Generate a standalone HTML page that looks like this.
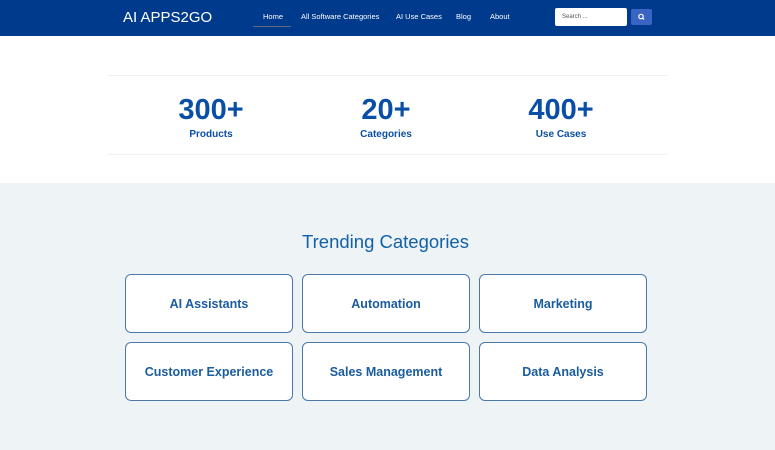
<!DOCTYPE html>
<html><head><style>
*{margin:0;padding:0;box-sizing:border-box}
body{width:775px;height:450px;overflow:hidden;font-family:"Liberation Sans",sans-serif;background:#fff}
.nav{height:36px;background:#003a8c;position:relative;color:#fff}
.logo{position:absolute;left:123px;top:9px;font-size:15px;letter-spacing:0}
.nav a{position:absolute;top:12px;font-size:7.5px;color:#fff}
.ul{position:absolute;left:253px;top:26px;width:38px;height:1px;background:#5a6a7a}
.search{position:absolute;left:555px;top:8px;width:72px;height:18px;background:#fff;border-radius:2px;color:#555;font-size:6px;padding:6px 0 0 7px}
.btn{position:absolute;left:631px;top:9px;width:21px;height:16px;background:#3a64c4;border-radius:2px}
.stats{position:relative;height:147px}
.line{position:absolute;left:107px;width:560px;height:1px;background:#eef0f2}
.stat{position:absolute;width:120px;text-align:center;color:#0a4fa6;font-weight:bold}
.stat b{display:block;font-size:29px;line-height:32px}
.stat span{font-size:10px;display:block;margin-top:3px}
.gray{background:#eef3f6;height:267px;position:relative}
h2{position:absolute;top:48px;width:100%;text-align:center;color:#1260a8;font-weight:normal;font-size:18.5px;left:-2px}
.card{position:absolute;width:168px;height:59px;border:1px solid #4a78a8;border-radius:6px;background:#fff;color:#1a5c9e;font-size:12.5px;font-weight:bold;display:flex;align-items:center;justify-content:center}
</style></head><body>
<div class="nav">
<div class="logo">AI APPS2GO</div>
<a style="left:263px">Home</a><div class="ul"></div>
<a style="left:301px">All Software Categories</a>
<a style="left:396px">AI Use Cases</a>
<a style="left:456px">Blog</a>
<a style="left:490px">About</a>
<div class="search">Search ...</div>
<div class="btn"><svg width="21" height="16"><circle cx="10" cy="7.5" r="2.2" stroke="#fff" stroke-width="1.2" fill="none"/><line x1="11.6" y1="9.1" x2="13" y2="10.5" stroke="#fff" stroke-width="1.3"/></svg></div>
</div>
<div class="stats">
<div class="line" style="top:39px"></div>
<div class="line" style="top:118px"></div>
<div class="stat" style="left:151px;top:58px"><b>300+</b><span>Products</span></div>
<div class="stat" style="left:326px;top:58px"><b>20+</b><span>Categories</span></div>
<div class="stat" style="left:501px;top:58px"><b>400+</b><span>Use Cases</span></div>
</div>
<div class="gray">
<h2>Trending Categories</h2>
<div class="card" style="left:125px;top:91px">AI Assistants</div>
<div class="card" style="left:302px;top:91px">Automation</div>
<div class="card" style="left:479px;top:91px">Marketing</div>
<div class="card" style="left:125px;top:159px">Customer Experience</div>
<div class="card" style="left:302px;top:159px">Sales Management</div>
<div class="card" style="left:479px;top:159px">Data Analysis</div>
</div>
</body></html>
